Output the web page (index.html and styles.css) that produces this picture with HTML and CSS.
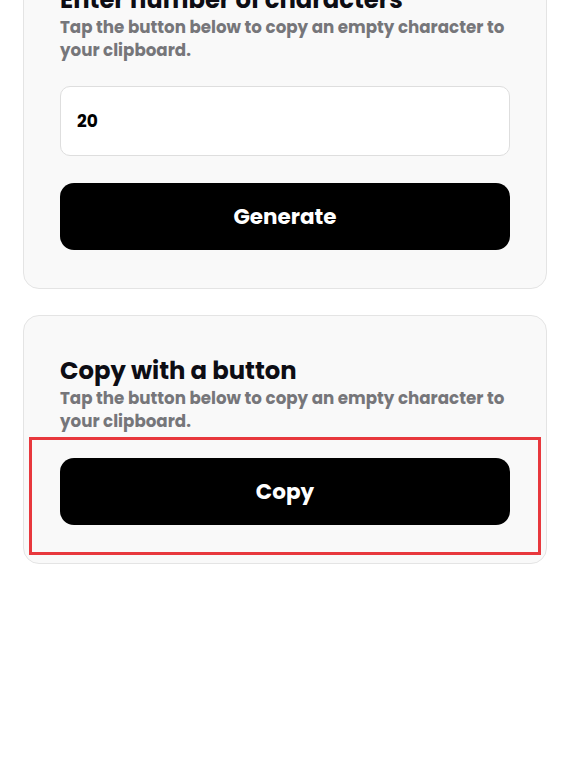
FILE: index.html
```html
<!DOCTYPE html>
<html lang="en">
<head>
<meta charset="utf-8">
<title>Empty character</title>
<link rel="stylesheet" href="styles.css">
</head>
<body>
<main class="page">
  <section class="card">
    <h2 class="card-title">Enter number of characters</h2>
    <p class="card-sub">Tap the button below to copy an empty character to your clipboard.</p>
    <input class="count-input" type="text" value="20">
    <button class="btn">Generate</button>
  </section>
  <section class="card">
    <h2 class="card-title">Copy with a button</h2>
    <p class="card-sub">Tap the button below to copy an empty character to your clipboard.</p>
    <div class="highlight-wrap">
      <button class="btn">Copy</button>
      <span class="highlight"></span>
    </div>
  </section>
</main>
</body>
</html>
```

FILE: styles.css
```css
* { box-sizing: border-box; }
html, body { margin: 0; padding: 0; background: #ffffff; }
body { font-family: "Poppins", Inter, "Noto Sans", sans-serif; color: #0d0d14; }

.page {
  display: flex;
  flex-direction: column;
  gap: 26px;
  padding: 0 23px;
  margin-top: -56px;
}

.card {
  display: flex;
  flex-direction: column;
  background: #f9f9f9;
  border: 1px solid #e4e4e4;
  border-radius: 16px;
  padding: 39px 36px 38px 36px;
}

.card-title {
  margin: 0;
  font-size: 24.3px;
  line-height: 32px;
  font-weight: 700;
  letter-spacing: 0;
}

.card-sub {
  margin: 0;
  font-size: 16.7px;
  line-height: 23px;
  font-weight: 700;
  color: #76767a;
}

.count-input {
  margin-top: 24px;
  height: 70px;
  width: 100%;
  background: #ffffff;
  border: 1px solid #dedede;
  border-radius: 10px;
  padding: 0 16px;
  font-family: inherit;
  font-size: 17px;
  font-weight: 700;
  color: #000;
  outline: none;
}

.btn {
  display: block;
  width: 100%;
  height: 67px;
  margin-top: 27px;
  border: 0;
  border-radius: 14px;
  background: #000;
  color: #fff;
  font-family: inherit;
  font-size: 21.5px;
  font-weight: 700;
}

.highlight-wrap {
  position: relative;
  margin-top: 25px;
}
.highlight-wrap .btn { margin-top: 0; }

.highlight {
  position: absolute;
  left: -31px;
  right: -31px;
  top: -21px;
  bottom: -30px;
  border: 3px solid #e8383d;
  pointer-events: none;
}
```
